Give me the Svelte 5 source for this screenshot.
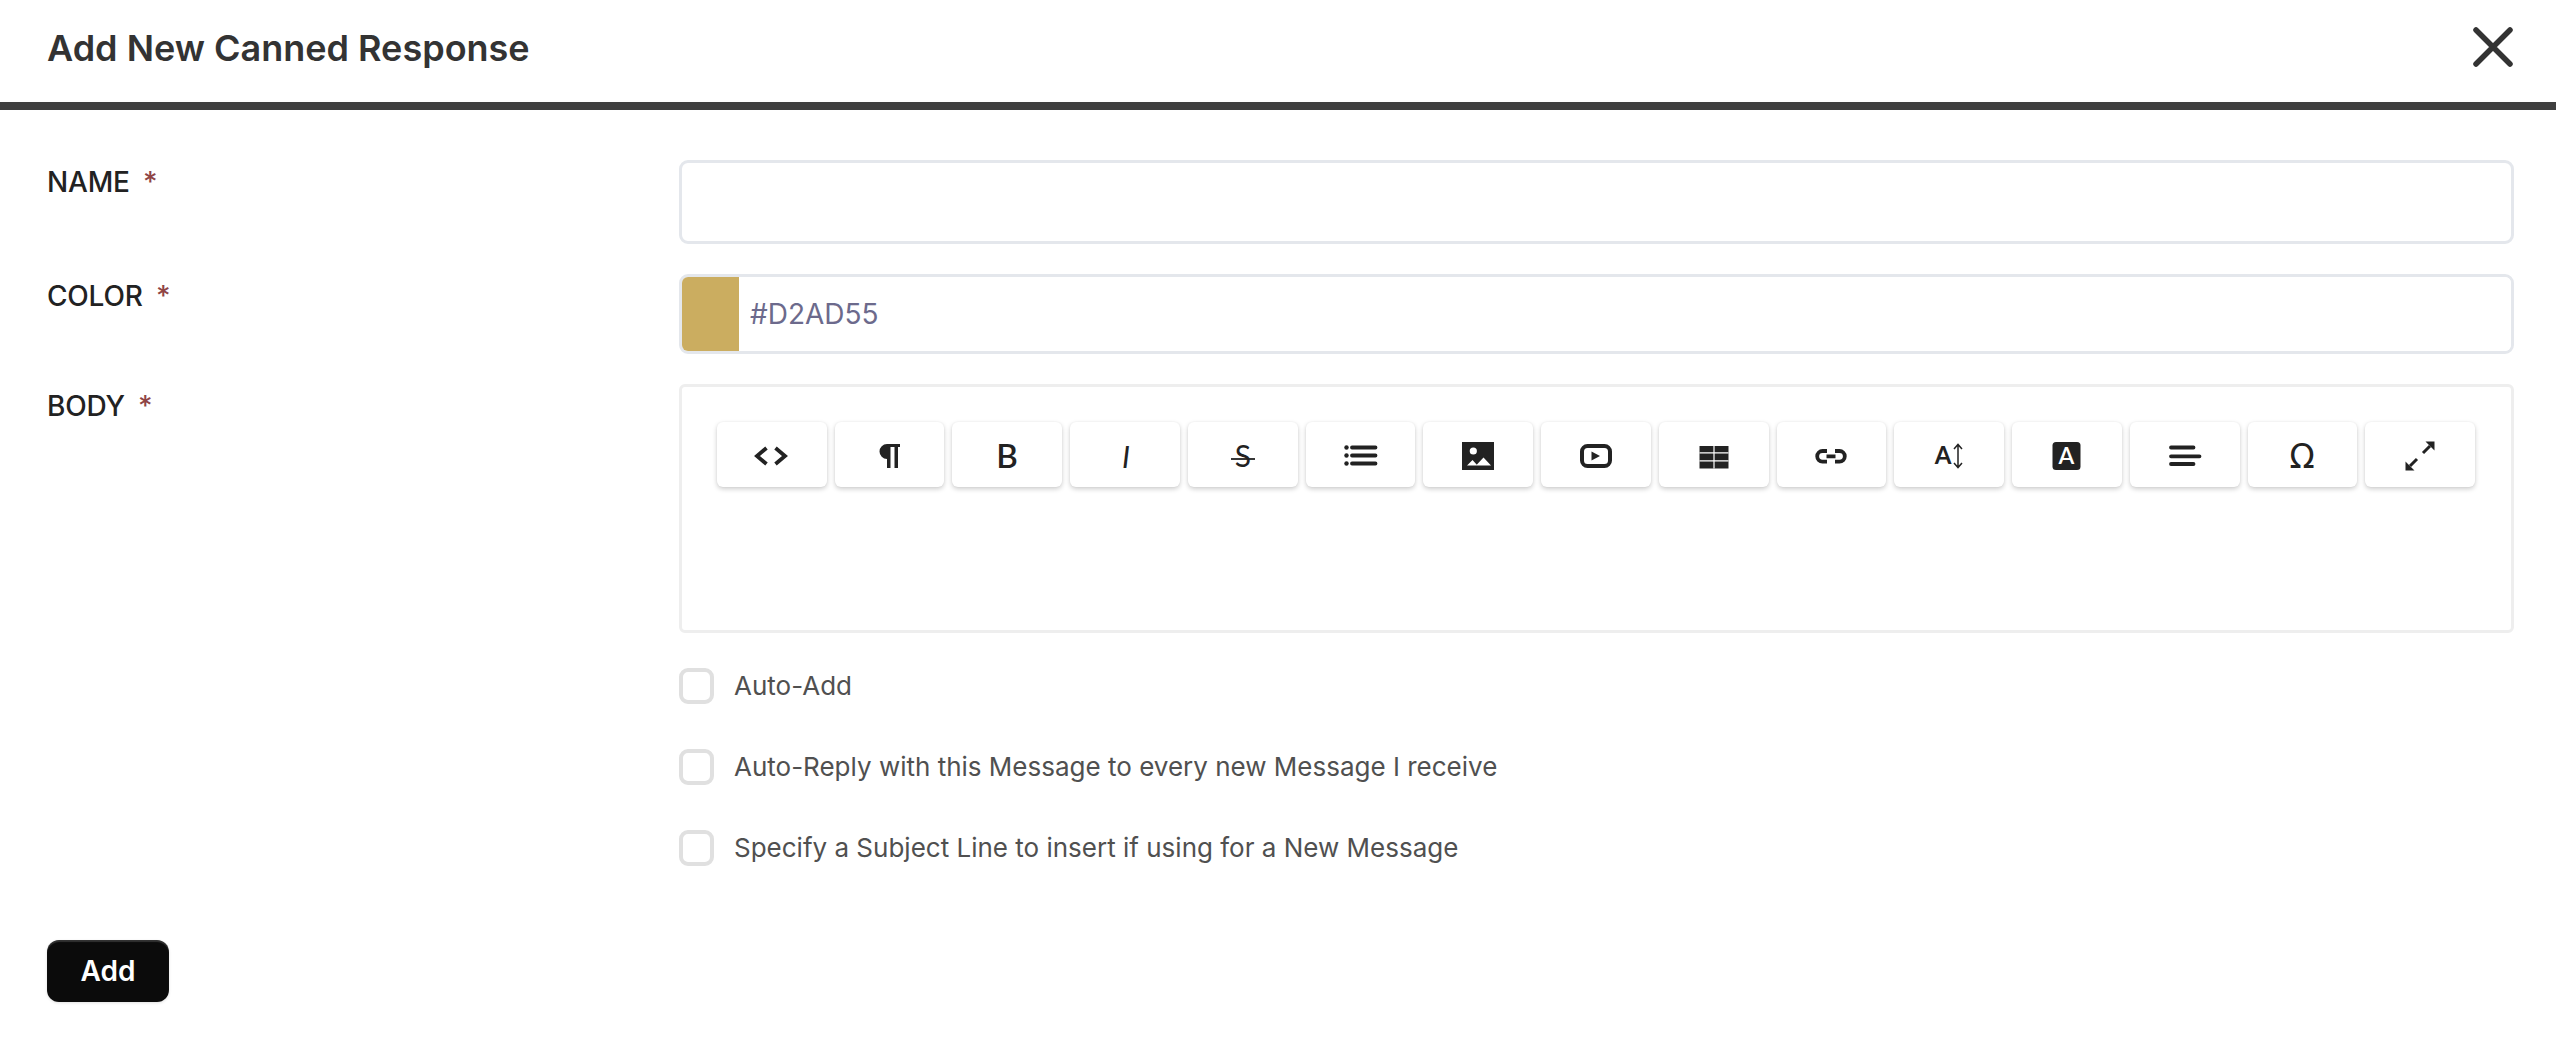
<script>
  let name = $state('');
  let color = $state('#D2AD55');
  let options = $state([
    { label: 'Auto-Add', checked: false },
    { label: 'Auto-Reply with this Message to every new Message I receive', checked: false },
    { label: 'Specify a Subject Line to insert if using for a New Message', checked: false }
  ]);
</script>

<div class="modal">
  <header class="head">
    <h1>Add New Canned Response</h1>
    <button class="close" aria-label="Close">
      <svg width="40" height="40" viewBox="0 0 40 40">
        <path d="M3 3 L37 37 M37 3 L3 37" fill="none" stroke="#333" stroke-width="5.500" stroke-linecap="round" />
      </svg>
    </button>
  </header>

  <form class="form" onsubmit={(e) => e.preventDefault()}>
    <div class="row name-row">
      <label for="cr-name">NAME <span class="req">*</span></label>
      <input id="cr-name" class="text" bind:value={name} />
    </div>

    <div class="row color-row">
      <label for="cr-color">COLOR <span class="req">*</span></label>
      <div class="color-field">
        <span class="swatch"></span>
        <input id="cr-color" bind:value={color} />
      </div>
    </div>

    <div class="row body-row">
      <span class="label">BODY <span class="req">*</span></span>
      <div class="editor">
        <div class="toolbar">
          <button type="button" aria-label="Code view">
            <svg viewBox="-24 -24 48 48"><path class="line" d="M-5.500-8-15 0-5.500 8M3.500-8 13 0 3.500 8" /></svg>
          </button>
          <button type="button" aria-label="Paragraph">
            <svg viewBox="-24 -24 48 48"><path class="solid" d="M10-12H-3A7.500 7.500 0 0 0-3 3V12H.5V-9H4.500V12H8V-9H10Z" /></svg>
          </button>
          <button type="button" aria-label="Bold">
            <svg viewBox="-24 -24 48 48"><text class="glyph semi" x="0" y="12">B</text></svg>
          </button>
          <button type="button" aria-label="Italic">
            <svg viewBox="-24 -24 48 48"><text class="glyph slant" x="1" y="12">I</text></svg>
          </button>
          <button type="button" aria-label="Strikethrough">
            <svg viewBox="-24 -24 48 48">
              <text class="glyph thin" x="0" y="11">S</text>
              <path d="M-12 3H12" stroke="#222" stroke-width="1.800" />
            </svg>
          </button>
          <button type="button" aria-label="List">
            <svg viewBox="-24 -24 48 48">
              <circle class="solid" cx="-14.500" cy="-8.500" r="2.200" />
              <circle class="solid" cx="-14.500" cy="-.5" r="2.200" />
              <circle class="solid" cx="-14.500" cy="7.500" r="2.200" />
              <path class="bar" d="M-9-8.500H14.500M-9-.5H14.500M-9 7.500H14.500" />
            </svg>
          </button>
          <button type="button" aria-label="Image">
            <svg viewBox="-24 -24 48 48">
              <path class="solid" d="M-16-14H16V14H-16Z" />
              <circle cx="-4.700" cy="-5" r="3.600" fill="#fff" />
              <path d="M-11 9.500-5.500 4-.5 9.500ZM-2 9.500 5.500 1.500 13 9.500Z" fill="#fff" />
            </svg>
          </button>
          <button type="button" aria-label="Video">
            <svg viewBox="-24 -24 48 48">
              <rect x="-14" y="-10" width="28" height="20" rx="5.500" fill="none" stroke="#222" stroke-width="4" />
              <path class="solid" d="M-4.500-4.500 4 0-4.500 4.500Z" />
            </svg>
          </button>
          <button type="button" aria-label="Table">
            <svg viewBox="-24 -24 48 48">
              <path class="solid" d="M-14.500-10H14.500V12.500H-14.500Z" />
              <path d="M0-10V12.500M-14.500-3.200H14.500M-14.500 4.800H14.500" stroke="#fff" stroke-width="1.200" />
            </svg>
          </button>
          <button type="button" aria-label="Link">
            <svg viewBox="-24 -24 48 48">
              <path class="thick" d="M-4-5H-8.500A5.300 5.300 0 0 0-8.500 5.600H-4M4-5H8.500A5.300 5.300 0 0 1 8.500 5.600H4M-4.500.3H4.500" />
            </svg>
          </button>
          <button type="button" aria-label="Font size">
            <svg viewBox="-24 -24 48 48">
              <text class="glyph heavy small" x="-6" y="8">A</text>
              <path d="M9-11V11M5-7 9-11.500 13-7M5 7 9 11.500 13 7" fill="none" stroke="#222" stroke-width="1.500" />
            </svg>
          </button>
          <button type="button" aria-label="Text color">
            <svg viewBox="-24 -24 48 48">
              <rect class="solid" x="-14.500" y="-14" width="28" height="28" rx="3.500" />
              <text class="glyph semi inverse" x="-.5" y="8">A</text>
            </svg>
          </button>
          <button type="button" aria-label="Align">
            <svg viewBox="-24 -24 48 48">
              <path class="bar" d="M-14-8.500H8.500M-14 .3H14.500M-14 8H8.500" />
            </svg>
          </button>
          <button type="button" aria-label="Special characters">
            <svg viewBox="-24 -24 48 48"><text class="glyph omega" x="0" y="12">Ω</text></svg>
          </button>
          <button type="button" aria-label="Fullscreen">
            <svg viewBox="-24 -24 48 48">
              <path class="solid" d="M14.500-14.500H5.500L14.500-5.500ZM-14.500 14.500H-5.500L-14.500 5.500Z" />
              <path d="M10-10 3-3M-10 10-3 3" stroke="#222" stroke-width="3" />
            </svg>
          </button>
        </div>
      </div>
    </div>

    <div class="checks">
      {#each options as option}
        <label class="check">
          <input type="checkbox" bind:checked={option.checked} />
          <span>{option.label}</span>
        </label>
      {/each}
    </div>

    <button class="add" type="submit">Add</button>
  </form>
</div>

<style>
  :global(body) {
    background: #fff;
  }

  .modal {
    font-family: Inter, "Liberation Sans", sans-serif;
    color: #222;
    height: 1040px;
    overflow: hidden;
  }

  .head {
    height: 102px;
    border-bottom: 8px solid #3f3f3f;
    display: flex;
    align-items: center;
    justify-content: space-between;
    padding: 0 43px 0 47px;
  }

  h1 {
    margin: 0 0 6px;
    font-size: 36px;
    font-weight: 600;
    color: #333;
  }

  .close {
    border: 0;
    background: none;
    padding: 0;
    width: 40px;
    height: 40px;
    margin-bottom: 9px;
  }

  .close svg {
    display: block;
  }

  .form {
    padding: 50px 42px 0 47px;
  }

  .row {
    display: grid;
    grid-template-columns: 633px 1fr;
  }

  .name-row {
    margin-bottom: 30px;
  }

  .color-row {
    margin-bottom: 30px;
  }

  .row > label,
  .label {
    font-size: 28px;
    font-weight: 500;
    letter-spacing: -0.2px;
    line-height: 34px;
    padding-top: 5px;
    color: #222;
  }

  .req {
    color: #8f4545;
    margin-left: 6px;
  }

  .text {
    height: 84px;
    box-sizing: border-box;
    border: 3px solid #e4e7ec;
    border-radius: 9px;
    outline: none;
    margin-left: -1px;
  }

  .color-field {
    height: 80px;
    box-sizing: border-box;
    display: flex;
    border: 3px solid #e4e7ec;
    border-radius: 9px;
    overflow: hidden;
    margin-left: -1px;
  }

  .swatch {
    width: 57px;
    background: #cbad60;
  }

  .color-field input {
    flex: 1;
    border: 0;
    outline: none;
    padding: 0 11px;
    font: 28px Inter, sans-serif;
    color: #6c6a8c;
  }

  .editor {
    height: 249px;
    box-sizing: border-box;
    border: 3px solid #eee;
    border-radius: 6px;
    padding: 35px 36px 0 35px;
    margin-left: -1px;
  }

  .toolbar {
    display: flex;
    gap: 8px;
  }

  .toolbar button {
    flex: 1;
    height: 65px;
    padding: 3px 0 0;
    border: 0;
    border-radius: 6px;
    background: #fff;
    box-shadow: 0 2px 5px rgba(0, 0, 0, 0.2), 0 0 2px rgba(0, 0, 0, 0.05);
    display: flex;
    align-items: center;
    justify-content: center;
  }

  .toolbar svg {
    width: 48px;
    height: 48px;
    display: block;
  }

  .line {
    fill: none;
    stroke: #222;
    stroke-width: 3.800;
  }

  .solid {
    fill: #222;
  }

  .bar {
    fill: none;
    stroke: #222;
    stroke-width: 3.800;
    stroke-linecap: round;
  }

  .thick {
    fill: none;
    stroke: #222;
    stroke-width: 3.800;
  }

  .glyph {
    fill: #222;
    text-anchor: middle;
    font-family: Lato, "Open Sans", sans-serif;
    font-size: 33px;
  }

  .semi {
    font-weight: 600;
  }

  .heavy {
    font-weight: 700;
  }

  .slant {
    font-style: italic;
    font-size: 30px;
  }

  .thin {
    font-size: 30px;
  }

  .small {
    font-size: 24px;
  }

  .inverse {
    fill: #fff;
    font-size: 23px;
  }

  .omega {
    font-family: "DejaVu Sans", sans-serif;
    font-size: 33px;
  }

  .checks {
    margin: 35px 0 0 632px;
    display: flex;
    flex-direction: column;
    gap: 45px;
  }

  .check {
    display: flex;
    align-items: center;
    gap: 20px;
    height: 36px;
    font-size: 26px;
    color: #505050;
  }

  .check span {
    margin-top: -2px;
  }

  .check input {
    appearance: none;
    width: 35px;
    height: 36px;
    margin: 0;
    box-sizing: border-box;
    border: 4px solid #e0e0e0;
    border-radius: 9px;
    background: #fff;
  }

  .add {
    display: block;
    margin-top: 74px;
    width: 122px;
    height: 62px;
    border: 0;
    border-radius: 12px;
    background: #0b0b0b;
    box-shadow: inset 0 2px 1px rgba(255, 255, 255, 0.16), 0 1px 3px rgba(0, 0, 0, 0.12);
    color: #fff;
    font: 600 28px Inter, sans-serif;
  }
</style>
